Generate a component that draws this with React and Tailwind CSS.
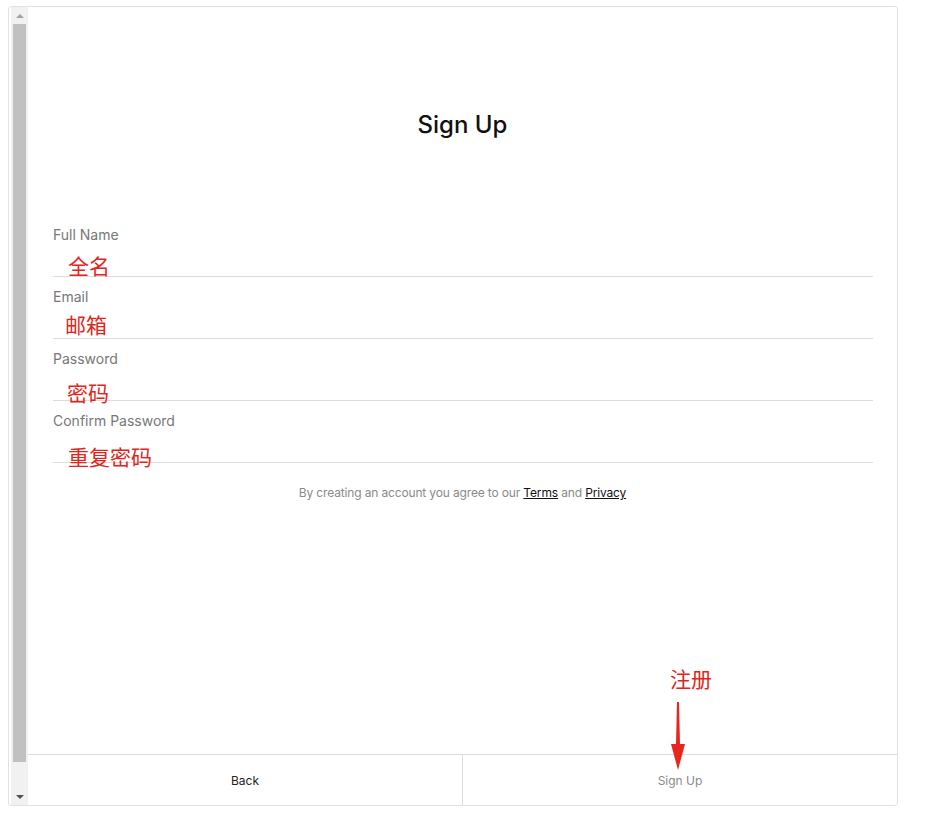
import React from 'react';

const fields = [
  { label: 'Full Name', note: '全名', noteClass: 'pt-[10px] pl-[15px]' },
  { label: 'Email', note: '邮箱', noteClass: 'pt-[7px] pl-[12px]' },
  { label: 'Password', note: '密码', noteClass: 'pt-[13px] pl-[14px]' },
  { label: 'Confirm Password', note: '重复密码', noteClass: 'pt-[15px] pl-[15px]' },
];

const font = { fontFamily: 'Inter, "Noto Sans CJK SC", sans-serif' };

const App = () => (
  <div className="w-[947px] h-[837px] bg-white pt-[6px] pl-[8px]" style={font}>
    <div className="relative w-[890px] h-[800px] border border-[#e2e2e2] rounded-[3px] flex bg-white">
      {/* fake scrollbar */}
      <div className="w-[19px] pl-[2px] flex flex-col">
        <div className="w-[17px] flex-1 bg-[#f1f1f1] flex flex-col items-center">
          <div className="h-[17px] flex items-center justify-center">
            <div className="w-0 h-0 border-l-[4px] border-r-[4px] border-b-[4px] border-l-transparent border-r-transparent border-b-[#a3a3a3]" />
          </div>
          <div className="w-[13px] h-[738px] bg-[#c1c1c1]" />
          <div className="flex-1" />
          <div className="h-[17px] flex items-center justify-center">
            <div className="w-0 h-0 border-l-[4px] border-r-[4px] border-t-[4px] border-l-transparent border-r-transparent border-t-[#505050]" />
          </div>
        </div>
      </div>

      <div className="flex-1 flex flex-col">
        <main className="flex-1 pt-[103px]">
          <h1 className="text-center text-[24px] leading-[30px] font-medium text-[#111]">Sign Up</h1>
          <div className="mt-[85px] ml-[25px] mr-[24px]">
            {fields.map((f) => (
              <div key={f.label} className="mb-[10px]">
                <div className="text-[14px] leading-[20px] text-[#777]">{f.label}</div>
                <div className="h-[32px] border-b border-[#dcdcdc]">
                  <div className={`${f.noteClass} text-[21px] leading-[24px] text-[#e0261c]`}>{f.note}</div>
                </div>
              </div>
            ))}
          </div>
          <p className="mt-[22px] text-center text-[12px] leading-[16px] tracking-[-0.15px] text-[#8a8a8a]">
            By creating an account you agree to our{' '}
            <a className="text-[#111] underline">Terms</a> and{' '}
            <a className="text-[#111] underline">Privacy</a>
          </p>
        </main>
        <footer className="h-[51px] border-t border-[#dcdcdc] flex">
          <button className="flex-1 pt-[1px] text-[12px] text-[#222] border-r border-[#dcdcdc]">Back</button>
          <button className="flex-1 pt-[1px] text-[12px] text-[#8a8a8a]">Sign Up</button>
        </footer>
      </div>

      {/* annotation */}
      <div className="absolute left-[661px] top-[661px] text-[21px] leading-[24px] text-[#e0261c]">注册</div>
      <svg className="absolute left-[660px] top-[695px]" width="18" height="68" viewBox="0 0 18 68">
        <polygon points="8,0 10,0 11,42 16,42 9,68 2,42 7,42" fill="#e8261c" />
      </svg>
    </div>
  </div>
);

export default App;
